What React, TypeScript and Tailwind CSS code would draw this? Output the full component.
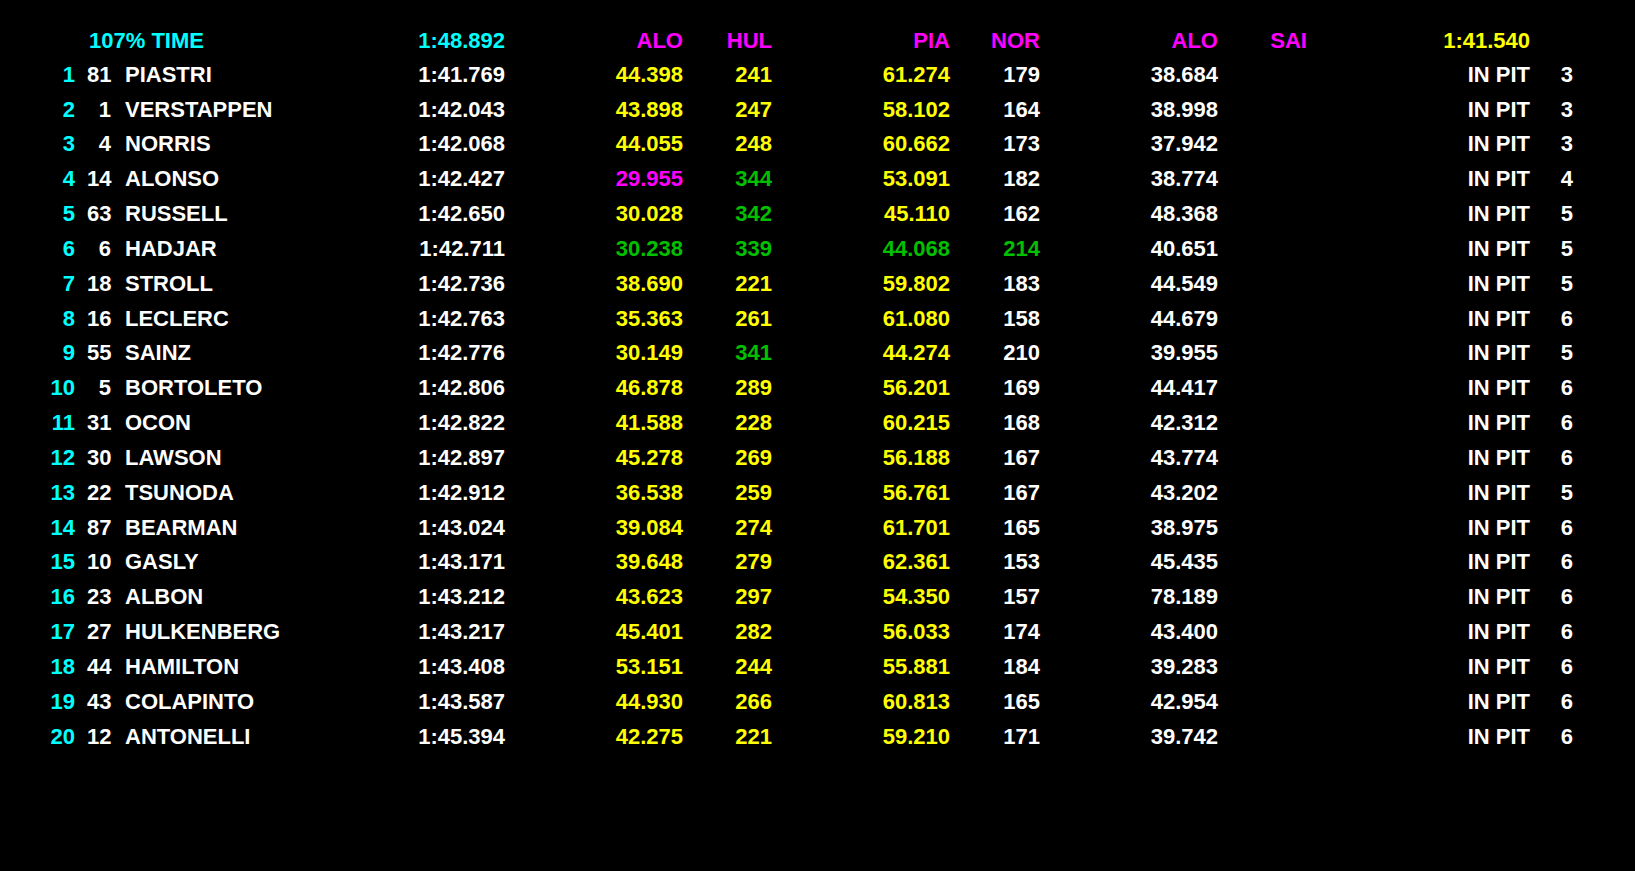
const Y = "text-[#ffff00]";
const W = "text-white";
const G = "text-[#00c000]";
const M = "text-[#ff00ff]";

type Row = {
  pos: number;
  car: number;
  name: string;
  lap: string;
  s1: [string, string];
  sp1: [string, string];
  s2: [string, string];
  sp2: [string, string];
  s3: string;
  stint: number;
};

const rows: Row[] = [
  { pos: 1, car: 81, name: "PIASTRI", lap: "1:41.769", s1: ["44.398", Y], sp1: ["241", Y], s2: ["61.274", Y], sp2: ["179", W], s3: "38.684", stint: 3 },
  { pos: 2, car: 1, name: "VERSTAPPEN", lap: "1:42.043", s1: ["43.898", Y], sp1: ["247", Y], s2: ["58.102", Y], sp2: ["164", W], s3: "38.998", stint: 3 },
  { pos: 3, car: 4, name: "NORRIS", lap: "1:42.068", s1: ["44.055", Y], sp1: ["248", Y], s2: ["60.662", Y], sp2: ["173", W], s3: "37.942", stint: 3 },
  { pos: 4, car: 14, name: "ALONSO", lap: "1:42.427", s1: ["29.955", M], sp1: ["344", G], s2: ["53.091", Y], sp2: ["182", W], s3: "38.774", stint: 4 },
  { pos: 5, car: 63, name: "RUSSELL", lap: "1:42.650", s1: ["30.028", Y], sp1: ["342", G], s2: ["45.110", Y], sp2: ["162", W], s3: "48.368", stint: 5 },
  { pos: 6, car: 6, name: "HADJAR", lap: "1:42.711", s1: ["30.238", G], sp1: ["339", G], s2: ["44.068", G], sp2: ["214", G], s3: "40.651", stint: 5 },
  { pos: 7, car: 18, name: "STROLL", lap: "1:42.736", s1: ["38.690", Y], sp1: ["221", Y], s2: ["59.802", Y], sp2: ["183", W], s3: "44.549", stint: 5 },
  { pos: 8, car: 16, name: "LECLERC", lap: "1:42.763", s1: ["35.363", Y], sp1: ["261", Y], s2: ["61.080", Y], sp2: ["158", W], s3: "44.679", stint: 6 },
  { pos: 9, car: 55, name: "SAINZ", lap: "1:42.776", s1: ["30.149", Y], sp1: ["341", G], s2: ["44.274", Y], sp2: ["210", W], s3: "39.955", stint: 5 },
  { pos: 10, car: 5, name: "BORTOLETO", lap: "1:42.806", s1: ["46.878", Y], sp1: ["289", Y], s2: ["56.201", Y], sp2: ["169", W], s3: "44.417", stint: 6 },
  { pos: 11, car: 31, name: "OCON", lap: "1:42.822", s1: ["41.588", Y], sp1: ["228", Y], s2: ["60.215", Y], sp2: ["168", W], s3: "42.312", stint: 6 },
  { pos: 12, car: 30, name: "LAWSON", lap: "1:42.897", s1: ["45.278", Y], sp1: ["269", Y], s2: ["56.188", Y], sp2: ["167", W], s3: "43.774", stint: 6 },
  { pos: 13, car: 22, name: "TSUNODA", lap: "1:42.912", s1: ["36.538", Y], sp1: ["259", Y], s2: ["56.761", Y], sp2: ["167", W], s3: "43.202", stint: 5 },
  { pos: 14, car: 87, name: "BEARMAN", lap: "1:43.024", s1: ["39.084", Y], sp1: ["274", Y], s2: ["61.701", Y], sp2: ["165", W], s3: "38.975", stint: 6 },
  { pos: 15, car: 10, name: "GASLY", lap: "1:43.171", s1: ["39.648", Y], sp1: ["279", Y], s2: ["62.361", Y], sp2: ["153", W], s3: "45.435", stint: 6 },
  { pos: 16, car: 23, name: "ALBON", lap: "1:43.212", s1: ["43.623", Y], sp1: ["297", Y], s2: ["54.350", Y], sp2: ["157", W], s3: "78.189", stint: 6 },
  { pos: 17, car: 27, name: "HULKENBERG", lap: "1:43.217", s1: ["45.401", Y], sp1: ["282", Y], s2: ["56.033", Y], sp2: ["174", W], s3: "43.400", stint: 6 },
  { pos: 18, car: 44, name: "HAMILTON", lap: "1:43.408", s1: ["53.151", Y], sp1: ["244", Y], s2: ["55.881", Y], sp2: ["184", W], s3: "39.283", stint: 6 },
  { pos: 19, car: 43, name: "COLAPINTO", lap: "1:43.587", s1: ["44.930", Y], sp1: ["266", Y], s2: ["60.813", Y], sp2: ["165", W], s3: "42.954", stint: 6 },
  { pos: 20, car: 12, name: "ANTONELLI", lap: "1:45.394", s1: ["42.275", Y], sp1: ["221", Y], s2: ["59.210", Y], sp2: ["171", W], s3: "39.742", stint: 6 },
];

const rowCls = "flex h-[34.84px] leading-[34.84px] whitespace-nowrap";

const App = () => {
  return (
    <div className="min-h-[871px] w-[1635px] bg-black pt-[24px] font-['Liberation_Sans',Arial,sans-serif] text-[22px] font-bold">
      {/* header */}
      <div className="flex h-[33.84px] leading-[34.84px] whitespace-nowrap">
        <span className="w-[89px]" />
        <span className="w-[292px] text-[#00ffff]">107% TIME</span>
        <span className="w-[124px] text-right text-[#00ffff]">1:48.892</span>
        <span className={`w-[178px] text-right ${M}`}>ALO</span>
        <span className={`w-[89px] text-right ${M}`}>HUL</span>
        <span className={`w-[178px] text-right ${M}`}>PIA</span>
        <span className={`w-[90px] text-right ${M}`}>NOR</span>
        <span className={`w-[178px] text-right ${M}`}>ALO</span>
        <span className={`w-[89px] text-right ${M}`}>SAI</span>
        <span className={`w-[223px] text-right ${Y}`}>1:41.540</span>
      </div>
      {rows.map((r) => (
        <div key={r.pos} className={rowCls}>
          <span className="w-[75px] text-right text-[#00ffff]">{r.pos}</span>
          <span className="ml-[12px] w-[24px] text-right text-white">{r.car}</span>
          <span className="ml-[14px] w-[256px] text-white">{r.name}</span>
          <span className="w-[124px] text-right text-white">{r.lap}</span>
          <span className={`w-[178px] text-right ${r.s1[1]}`}>{r.s1[0]}</span>
          <span className={`w-[89px] text-right ${r.sp1[1]}`}>{r.sp1[0]}</span>
          <span className={`w-[178px] text-right ${r.s2[1]}`}>{r.s2[0]}</span>
          <span className={`w-[90px] text-right ${r.sp2[1]}`}>{r.sp2[0]}</span>
          <span className="w-[178px] text-right text-white">{r.s3}</span>
          <span className="w-[89px]" />
          <span className="w-[223px] text-right text-white">IN PIT</span>
          <span className="w-[43px] text-right text-white">{r.stint}</span>
        </div>
      ))}
    </div>
  );
};

export default App;
